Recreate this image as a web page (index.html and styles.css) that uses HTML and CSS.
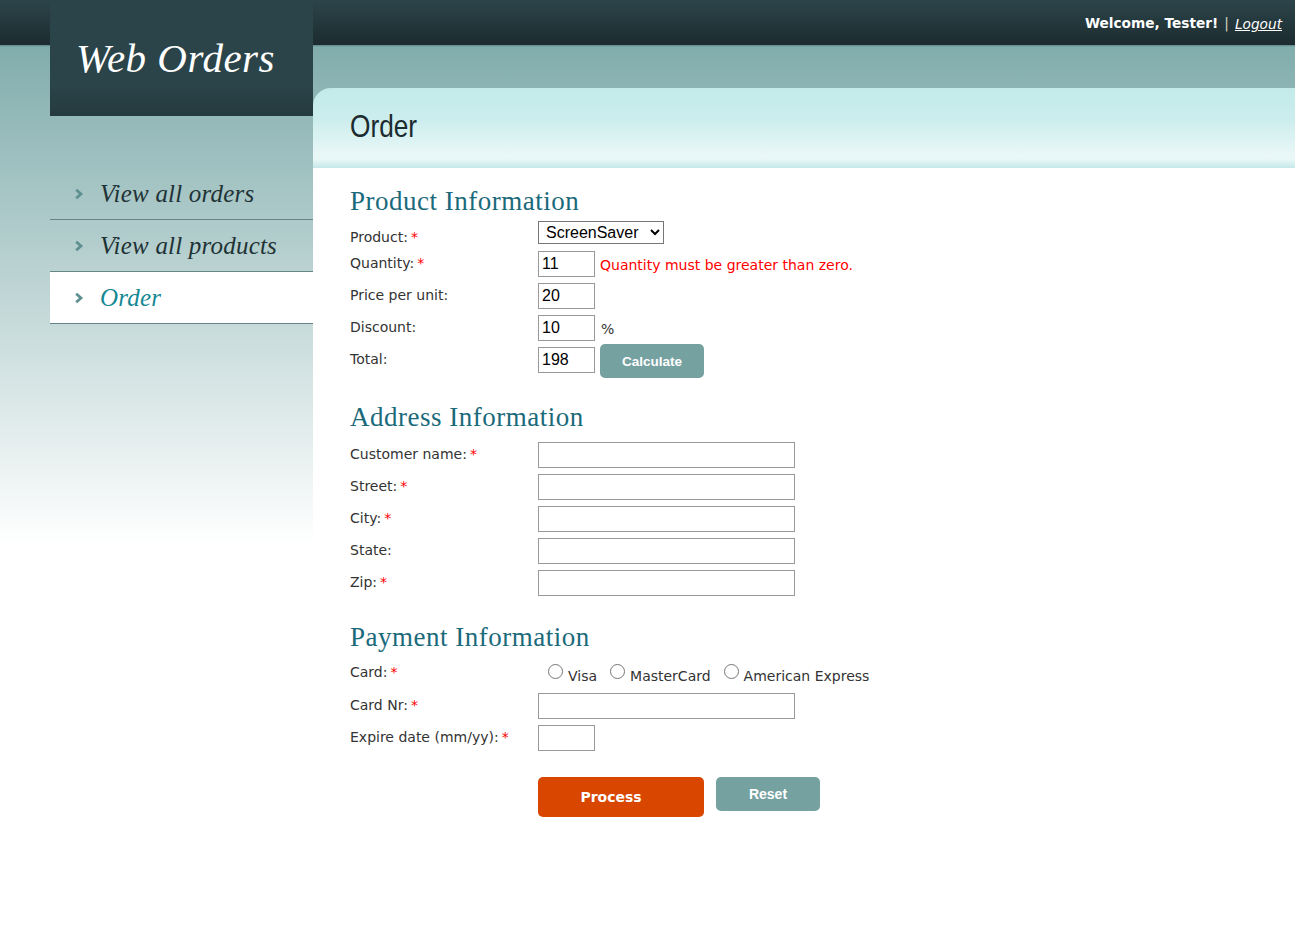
FILE: index.html
```html
<!DOCTYPE html>
<html lang="en">
<head>
<meta charset="utf-8">
<title>Web Orders - Order</title>
<link rel="stylesheet" href="styles.css">
</head>
<body>
<div class="page">
  <aside class="side">
    <div class="logo">Web Orders</div>
    <ul class="nav">
      <li class="nav-item"><svg class="chev" width="10" height="12" viewBox="0 0 10 12"><path d="M2.2 1.8 L7 6 L2.2 10.2" fill="none" stroke="#5e8f91" stroke-width="2.8"/></svg><a href="#">View all orders</a></li>
      <li class="nav-item"><svg class="chev" width="10" height="12" viewBox="0 0 10 12"><path d="M2.2 1.8 L7 6 L2.2 10.2" fill="none" stroke="#5e8f91" stroke-width="2.8"/></svg><a href="#">View all products</a></li>
      <li class="nav-item active"><svg class="chev" width="10" height="12" viewBox="0 0 10 12"><path d="M2.2 1.8 L7 6 L2.2 10.2" fill="none" stroke="#5e8f91" stroke-width="2.8"/></svg><a href="#">Order</a></li>
    </ul>
  </aside>
  <main class="main">
    <div class="topbar"><span class="welcome">Welcome, Tester!</span><span class="sep">|</span><a class="logout" href="#">Logout</a></div>
    <div class="content-head"><h1 class="title">Order</h1></div>
    <div class="content">
      <section class="sec sec-product">
        <h2 class="sec-title">Product Information</h2>
        <div class="row row-product">
          <label class="lbl lbl-sel">Product:<span class="req">*</span></label>
          <select class="sel"><option>ScreenSaver</option></select>
        </div>
        <div class="row">
          <label class="lbl">Quantity:<span class="req">*</span></label>
          <input class="inp inp-s" type="text" value="11">
          <span class="err">Quantity must be greater than zero.</span>
        </div>
        <div class="row">
          <label class="lbl">Price per unit:</label>
          <input class="inp inp-s" type="text" value="20">
        </div>
        <div class="row">
          <label class="lbl">Discount:</label>
          <input class="inp inp-s" type="text" value="10">
          <span class="pct">%</span>
        </div>
        <div class="row">
          <label class="lbl">Total:</label>
          <input class="inp inp-s" type="text" value="198">
          <button class="btn btn-calc" type="button">Calculate</button>
        </div>
      </section>
      <section class="sec sec-address">
        <h2 class="sec-title">Address Information</h2>
        <div class="row"><label class="lbl">Customer name:<span class="req">*</span></label><input class="inp inp-l" type="text"></div>
        <div class="row"><label class="lbl">Street:<span class="req">*</span></label><input class="inp inp-l" type="text"></div>
        <div class="row"><label class="lbl">City:<span class="req">*</span></label><input class="inp inp-l" type="text"></div>
        <div class="row"><label class="lbl">State:</label><input class="inp inp-l" type="text"></div>
        <div class="row"><label class="lbl">Zip:<span class="req">*</span></label><input class="inp inp-l" type="text"></div>
      </section>
      <section class="sec sec-payment">
        <h2 class="sec-title">Payment Information</h2>
        <div class="row row-card">
          <label class="lbl lbl-sel">Card:<span class="req">*</span></label>
          <div class="radios">
            <label class="radio"><input type="radio" name="card"><span>Visa</span></label>
            <label class="radio"><input type="radio" name="card"><span>MasterCard</span></label>
            <label class="radio"><input type="radio" name="card"><span>American Express</span></label>
          </div>
        </div>
        <div class="row"><label class="lbl">Card Nr:<span class="req">*</span></label><input class="inp inp-l" type="text"></div>
        <div class="row"><label class="lbl">Expire date (mm/yy):<span class="req">*</span></label><input class="inp inp-s" type="text"></div>
        <div class="actions">
          <button class="btn btn-process" type="button">Process</button>
          <button class="btn btn-reset" type="button">Reset</button>
        </div>
      </section>
    </div>
  </main>
</div>
</body>
</html>
```

FILE: styles.css
```css
html, body {
  margin: 0;
  padding: 0;
}
body {
  min-height: 945px;
  background:
    linear-gradient(to bottom, #2c454a 0px, #1c2b2f 45px, #5f8585 45px, #82adad 47px, #ffffff 545px, #ffffff 100%);
  background-repeat: no-repeat;
  font-family: "DejaVu Sans", Verdana, sans-serif;
  font-size: 14px;
  color: #333;
}
.page {
  display: flex;
  align-items: flex-start;
}
.side {
  flex: none;
  width: 263px;
  margin-left: 50px;
}
.logo {
  height: 116px;
  box-sizing: border-box;
  padding: 36px 0 0 26px;
  background: linear-gradient(to bottom, #2b4449 0px, #2b4449 85px, #243a3e 116px);
  color: #ffffff;
  font-family: "Liberation Serif", Georgia, serif;
  font-style: italic;
  font-size: 41px;
  line-height: 44px;
  letter-spacing: 0.5px;
}
.nav {
  list-style: none;
  margin: 52px 0 0 0;
  padding: 0;
}
.nav-item {
  height: 51px;
  border-bottom: 1px solid #658587;
  display: flex;
  align-items: center;
  padding-left: 24px;
}
.nav-item.active {
  background: #ffffff;
}
.chev {
  flex: none;
  margin-right: 16px;
  margin-top: 0;
}
.nav-item a {
  font-family: "Liberation Serif", Georgia, serif;
  font-style: italic;
  font-size: 25px;
  color: #1f3336;
  text-decoration: none;
  letter-spacing: 0.2px;
}
.nav-item.active a {
  color: #168895;
}
.main {
  flex: 1;
  min-width: 0;
}
.topbar {
  height: 46px;
  display: flex;
  align-items: center;
  justify-content: flex-end;
  padding-right: 13px;
  color: #ffffff;
  font-size: 13.7px;
}
.welcome {
  font-weight: bold;
}
.sep {
  color: #d8d8c0;
  margin: 0 6px;
}
.logout {
  color: #ffffff;
  font-style: italic;
  text-decoration: underline;
  padding-top: 1px;
}
.content-head {
  margin-top: 42px;
  height: 80px;
  box-sizing: border-box;
  border-top-left-radius: 18px;
  background: linear-gradient(to bottom, #c3eaea 0px, #cbeded 30px, #eaf7f7 68px, #e6f6f6 72px, #c6e8e8 80px);
  padding: 18px 0 0 37px;
}
.title {
  margin: 0;
  font-family: "Liberation Sans", Arial, sans-serif;
  font-weight: normal;
  font-size: 32px;
  line-height: 40px;
  color: #1c2b2f;
  transform: scaleX(0.82);
  transform-origin: left center;
}
.content {
  background: #ffffff;
  padding: 16px 0 100px 37px;
  min-height: 660px;
}
.sec-title {
  margin: 0;
  padding-top: 2px;
  font-family: "Liberation Serif", Georgia, serif;
  font-weight: normal;
  font-size: 27px;
  line-height: 30px;
  color: #1b6a7b;
  letter-spacing: 0.5px;
}
.sec-product .sec-title {
  margin-bottom: 5px;
}
.sec-address {
  margin-top: 21px;
}
.sec-address .sec-title {
  margin-bottom: 10px;
}
.sec-payment {
  margin-top: 18px;
}
.sec-payment .sec-title {
  margin-bottom: 4px;
}
.row {
  display: flex;
  align-items: flex-start;
  height: 32px;
}
.row-product {
  height: 30px;
}
.row-card {
  height: 37px;
}
.lbl {
  flex: none;
  width: 188px;
  padding-top: 4px;
  line-height: 16px;
  color: #333;
}
.lbl-sel {
  padding-top: 8px;
}
.req {
  color: #ff0000;
  margin-left: 3px;
}
.sel {
  height: 23px;
  box-sizing: border-box;
  font-family: "Liberation Sans", Arial, sans-serif;
  font-size: 16px;
  color: #000;
  border: 1px solid #767676;
  border-radius: 0;
  padding: 0 2px 0 3px;
  background: #fff;
  width: 126px;
}
.inp {
  box-sizing: border-box;
  height: 26px;
  border: 1px solid #999;
  font-family: "Liberation Sans", Arial, sans-serif;
  font-size: 16px;
  color: #000;
  padding: 0 3px;
  margin: 0;
  background: #fff;
}
.inp-s {
  width: 57px;
}
.inp-l {
  width: 257px;
}
.err {
  color: #ff0000;
  margin-left: 5px;
  padding-top: 6px;
  line-height: 16px;
}
.pct {
  margin-left: 6px;
  padding-top: 6px;
  line-height: 16px;
}
.btn {
  border: none;
  color: #ffffff;
  font-weight: bold;
  cursor: pointer;
  border-radius: 5px;
}
.btn-calc {
  width: 104px;
  height: 34px;
  margin: -3px 0 0 5px;
  background: #76a1a1;
  font-family: "Liberation Sans", Arial, sans-serif;
  font-size: 13.5px;
}
.radios {
  display: flex;
  align-items: flex-start;
  padding-left: 9px;
  padding-top: 8px;
}
.radio {
  display: flex;
  align-items: flex-start;
  margin-right: 12px;
  line-height: 16px;
}
.radio input {
  width: 15px;
  height: 15px;
  margin: 0 5px 0 1px;
  accent-color: #555;
}
.radio span {
  padding-top: 4px;
  font-size: 14px;
}
.actions {
  display: flex;
  gap: 12px;
  margin: 20px 0 0 188px;
  align-items: flex-start;
}
.btn-process {
  width: 166px;
  height: 40px;
  background: #d94600;
  font-family: "DejaVu Sans", Verdana, sans-serif;
  font-size: 14px;
  padding: 0 20px 0 0;
}
.btn-reset {
  width: 104px;
  height: 34px;
  background: #76a1a1;
  font-family: "Liberation Sans", Arial, sans-serif;
  font-size: 14px;
  padding-bottom: 2px;
}
```
